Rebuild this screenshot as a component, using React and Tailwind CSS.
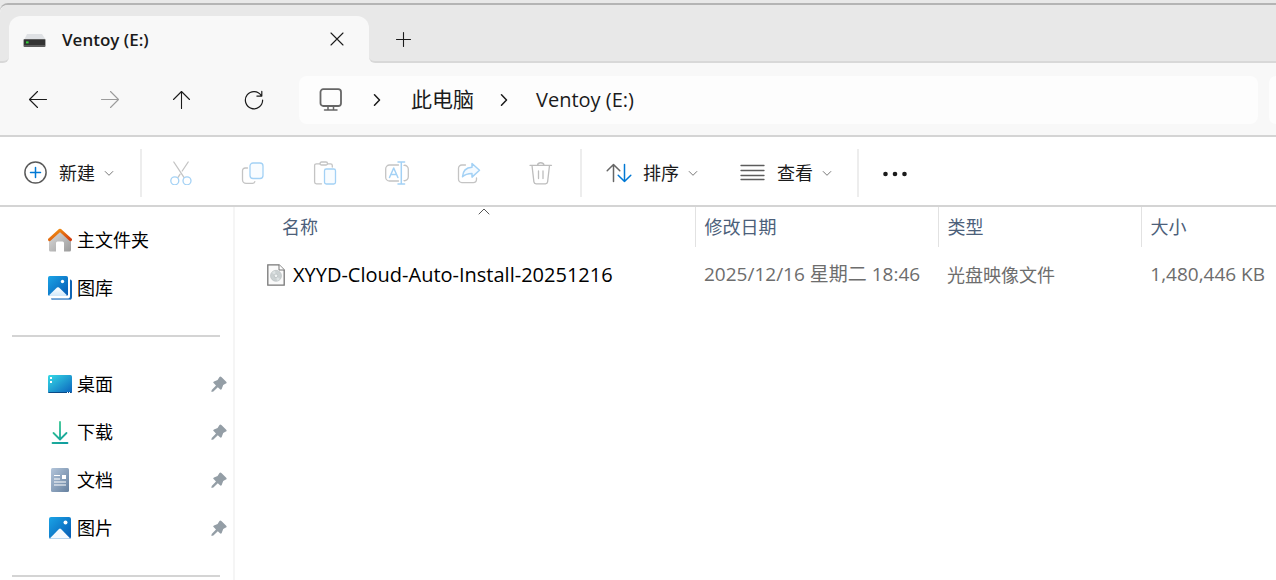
import React from "react";

const DriveIcon = () => (
  <svg width="24" height="24" viewBox="0 0 24 24">
    <path d="M4 6h15l4 6H1z" fill="#dfe1e4" />
    <rect x="0.5" y="11" width="22" height="8" rx="1" fill="#5c5c5c" />
    <rect x="1" y="12" width="21" height="5" fill="#333333" />
    <rect x="3" y="13.4" width="2.6" height="2" fill="#35d43a" />
  </svg>
);

const Stroke = ({ children, size = 24, width = 1.3, className = "" }) => (
  <svg
    width={size}
    height={size}
    viewBox={`0 0 ${size} ${size}`}
    fill="none"
    stroke="currentColor"
    strokeWidth={width}
    strokeLinecap="round"
    strokeLinejoin="round"
    className={`shrink-0 ${className}`}
  >
    {children}
  </svg>
);

const BackIcon = () => (
  <Stroke width={1.1}>
    <path d="M20.5 11.5H3.5M11.5 3.5l-8 8 8 8" />
  </Stroke>
);

const ForwardIcon = () => (
  <Stroke width={1.1}>
    <path d="M3.5 11.5h17M12.5 3.5l8 8-8 8" />
  </Stroke>
);

const UpIcon = () => (
  <Stroke width={1.1}>
    <path d="M11.5 20.5v-17M3.5 11.5l8-8 8 8" />
  </Stroke>
);

const RefreshIcon = () => (
  <Stroke width={1.2}>
    <path d="M19.2 7.5A8.6 8.6 0 1 0 20.6 12M19.8 3.4v4.7h-4.9" />
  </Stroke>
);

const MonitorIcon = () => (
  <Stroke width={1.8} className="text-[#666666]">
    <rect x="1.5" y="1.2" width="20.5" height="16.8" rx="2.8" />
    <path d="M9 18v4M14.5 18v4M5.5 22h12.5" strokeWidth="1.5" />
  </Stroke>
);

const CrumbIcon = () => (
  <Stroke size={12} width={1.5} className="text-[#1b1b1b]">
    <path d="M3.5 0.8l5 5.2-5 5.2" />
  </Stroke>
);

const ChevronDown = () => (
  <Stroke size={10} width={1} className="text-[#777777]">
    <path d="M1.2 3.5l3.8 3.8 3.8-3.8" />
  </Stroke>
);

const NewIcon = () => (
  <Stroke>
    <circle cx="11.5" cy="11.5" r="10.6" stroke="#5a5a5a" strokeWidth="1.5" />
    <path d="M11.5 6.5v10M6.5 11.5h10" stroke="#0078d4" strokeWidth="1.5" />
  </Stroke>
);

const CutIcon = () => (
  <Stroke>
    <path d="M4.8 1l10 15.2M19.2 1l-6 9M11 13.3l-2 3" stroke="#c4c4c4" />
    <circle cx="5.8" cy="19.8" r="4" stroke="#a3d1f5" />
    <circle cx="18" cy="19.8" r="4" stroke="#a3d1f5" />
  </Stroke>
);

const CopyIcon = () => (
  <Stroke>
    <path
      d="M6.5 7H4.2a2.7 2.7 0 0 0-2.7 2.8v9a3.6 3.6 0 0 0 3.6 3.6h6.2a2.5 2.5 0 0 0 2.5-1.8"
      stroke="#c4c4c4"
    />
    <rect x="9" y="2" width="13" height="15.5" rx="3" stroke="#a3d1f5" fill="#f8fcff" />
  </Stroke>
);

const PasteIcon = () => (
  <Stroke>
    <path
      d="M7 2.8H3.4A1.8 1.8 0 0 0 1.6 4.6V21a1.8 1.8 0 0 0 1.8 1.8h5.1M14.5 2.8h3a1.8 1.8 0 0 1 1.8 1.8V6"
      stroke="#c4c4c4"
    />
    <rect x="7" y="1" width="7.5" height="3" rx="1.5" stroke="#c4c4c4" />
    <rect x="11.5" y="8" width="11" height="15" rx="1.8" stroke="#a3d1f5" fill="#f8fcff" />
  </Stroke>
);

const RenameIcon = () => (
  <Stroke>
    <path
      d="M13.5 4h-9A3.8 3.8 0 0 0 .7 7.8v8.4A3.8 3.8 0 0 0 4.5 20h9M19 4.3A3.8 3.8 0 0 1 23.3 8v8a3.8 3.8 0 0 1-4.3 3.7"
      stroke="#c4c4c4"
    />
    <path
      d="M4.5 16.5L8.7 7l4.2 9.5M6 13.5h5.4M16.3 1v22M13 1h6.6M13 23h6.6"
      stroke="#a3d1f5"
      strokeWidth="1.5"
    />
  </Stroke>
);

const ShareIcon = () => (
  <Stroke>
    <path
      d="M8.5 4H4.8a3.3 3.3 0 0 0-3.3 3.3v11a3.3 3.3 0 0 0 3.3 3.3h11.4a3.3 3.3 0 0 0 3.3-3.3V17"
      stroke="#c4c4c4"
    />
    <path
      d="M15 2.5l7.5 6.8-7.5 6.8v-3.6c-4.5 0-7 .8-9.5 3.3.3-6 3.8-9.3 9.5-9.6z"
      stroke="#a3d1f5"
      strokeWidth="1.5"
      fill="#f4faff"
    />
  </Stroke>
);

const TrashIcon = () => (
  <Stroke className="text-[#bdbdbd]">
    <path d="M1 4.3h21.5M3 4.5l1.9 16.4a2.2 2.2 0 0 0 2.2 1.9h9.3a2.2 2.2 0 0 0 2.2-1.9l1.9-16.4M8.5 4A3.3 2.7 0 0 1 15 4M9.5 10v7.5M14 10v7.5" />
  </Stroke>
);

const SortIcon = () => (
  <Stroke size={26} width={1.5}>
    <path d="M7.5 21.5v-17M1.2 10.8l6.3-6.3 6.3 6.3" stroke="#666666" />
    <path d="M18.5 4.500v17M12.200 15.200l6.300 6.300 6.300-6.300" stroke="#0078d4" />
  </Stroke>
);

const ViewIcon = () => (
  <Stroke size={26} width={1.3} className="text-[#5c5c5c]">
    <path d="M1 5.5h23M1 10.5h23M1 15.5h23M1 19.5h23" />
  </Stroke>
);

const MoreIcon = () => (
  <svg width="26" height="24" viewBox="0 0 26 24" fill="#1b1b1b">
    <circle cx="3.5" cy="13" r="2.3" />
    <circle cx="13" cy="13" r="2.3" />
    <circle cx="22.5" cy="13" r="2.3" />
  </svg>
);

const HomeIcon = () => (
  <svg width="24" height="24" viewBox="0 0 24 24">
    <defs>
      <linearGradient id="wall" x1="0" y1="0" x2="1" y2="1">
        <stop offset="0" stopColor="#dedede" />
        <stop offset="1" stopColor="#9b9b9b" />
      </linearGradient>
      <linearGradient id="roof" x1="0" y1="0" x2="1" y2="1">
        <stop offset="0" stopColor="#f59b14" />
        <stop offset="1" stopColor="#d23c0e" />
      </linearGradient>
    </defs>
    <path
      d="M12 2.5L1 12.8V22a1.500 1.500 0 0 0 1.500 1.500H8V15a1.500 1.500 0 0 1 1.500-1.500h5A1.500 1.500 0 0 1 16 15v8.500h5.500A1.500 1.500 0 0 0 23 22v-9.200z"
      fill="url(#wall)"
    />
    <path
      d="M1.5 11.7L12 2.2l10.5 9.5"
      fill="none"
      stroke="url(#roof)"
      strokeWidth="3"
      strokeLinecap="round"
      strokeLinejoin="round"
    />
  </svg>
);

const GalleryIcon = () => (
  <svg width="24" height="24" viewBox="0 0 24 24">
    <defs>
      <linearGradient id="sky" x1="0" y1="0" x2="1" y2="1">
        <stop offset="0" stopColor="#1ba4e6" />
        <stop offset="1" stopColor="#0559b3" />
      </linearGradient>
      <linearGradient id="hill" x1="0" y1="0" x2="0" y2="1">
        <stop offset="0" stopColor="#ffffff" />
        <stop offset="1" stopColor="#cfe8fb" />
      </linearGradient>
    </defs>
    <path d="M3 22.5h17a2 2 0 0 0 2-2v-17a2 2 0 0 1 2 1.800V21a3 3 0 0 1-3 3H5a2 2 0 0 1-2-1.500z" fill="#1266b5" />
    <path d="M3 22.5h17l3 1a3 3 0 0 1-2 .5H5a2 2 0 0 1-2-1.500z" fill="#6ea3d8" />
    <rect width="20" height="20" rx="1.8" fill="url(#sky)" />
    <path d="M1 19.300l8-7.700a1.500 1.500 0 0 1 2 0l8 7.700q-.4.700-1.200.7H2.200Q1.300 20 1 19.300z" fill="url(#hill)" />
    <circle cx="14.5" cy="5.5" r="1.7" fill="#fff" />
  </svg>
);

const DesktopIcon = () => (
  <svg width="24" height="24" viewBox="0 0 24 24">
    <defs>
      <linearGradient id="desk" x1="0" y1="0" x2="1" y2="1">
        <stop offset="0" stopColor="#36dbe6" />
        <stop offset="1" stopColor="#0b62bd" />
      </linearGradient>
    </defs>
    <rect y="3" width="24" height="18" rx="1.5" fill="url(#desk)" />
    <path d="M0 20h24a1.500 1.500 0 0 1-1.500 1h-21A1.500 1.500 0 0 1 0 20z" fill="#0a4a86" />
    <path d="M2 5h2v2H2zM2 9h2v2H2zM19 20h1v1h-1zM21 20h1v1h-1z" fill="#fff" />
  </svg>
);

const DownloadIcon = () => (
  <svg width="24" height="24" viewBox="0 0 24 24">
    <defs>
      <linearGradient id="down" gradientUnits="userSpaceOnUse" x1="4" y1="0" x2="20" y2="24">
        <stop offset="0" stopColor="#3fcf8e" />
        <stop offset="1" stopColor="#0c9aa0" />
      </linearGradient>
    </defs>
    <path
      d="M12 2v17M5.5 13l6.500 6.500 6.500-6.500M4.500 23h15"
      fill="none"
      stroke="url(#down)"
      strokeWidth="1.8"
      strokeLinecap="round"
      strokeLinejoin="round"
    />
  </svg>
);

const DocumentIcon = () => (
  <svg width="24" height="24" viewBox="0 0 24 24">
    <defs>
      <linearGradient id="doc" x1="0" y1="0" x2="1" y2="1">
        <stop offset="0" stopColor="#b3c5da" />
        <stop offset="1" stopColor="#65809f" />
      </linearGradient>
    </defs>
    <rect x="3" width="18" height="24" rx="1.5" fill="url(#doc)" />
    <path d="M6 7.5h6M6 11h6M6 14h12M6 17h12" stroke="#fff" strokeWidth="1.2" />
    <rect x="14" y="7" width="4" height="4" fill="#fff" />
  </svg>
);

const PictureIcon = () => (
  <svg width="24" height="24" viewBox="0 0 24 24">
    <rect x="1" y="1" width="22" height="22" rx="2" fill="url(#sky)" />
    <path d="M2 22.200l9-9.200a1.500 1.500 0 0 1 2 0l9 9.200q-.5.600-1.200.6H3.200q-.7 0-1.200-.6z" fill="#f4f9fe" />
    <circle cx="17.5" cy="6.5" r="2" fill="#fff" />
  </svg>
);

const PinIcon = () => (
  <svg width="16" height="16" viewBox="0 0 16 16" className="shrink-0" fill="#949ea6">
    <path d="M8.300 1.200q1-1.200 2.100-.1l4.800 4.600q1 1.200-.3 1.900l-2.700 1.500-1.500 3.800q-.7 1.300-1.700.3L6.800 11.200 2.400 15.400.4 15.900l.3-1.900 4.300-4.500L2.600 7.100q-.9-1.100.4-1.700L6.600 4z" />
  </svg>
);

const DiscImageIcon = () => (
  <svg width="18" height="22" viewBox="0 0 18 22" className="shrink-0">
    <path d="M.8.8H12L17.200 6v15.200H.8z" fill="#fafafa" stroke="#777" strokeWidth="1.3" />
    <path d="M12 .8V6h5.200" fill="#fff" stroke="#777" />
    <circle cx="9" cy="11.800" r="5.500" fill="#cbd1d2" stroke="#b4babc" strokeWidth=".6" />
    <path d="M9 11.800L5 8.700a5 5 0 0 1 3-1.800zM9 11.800l4 3.100a5 5 0 0 1-3 1.800z" fill="#dde2e3" />
    <circle cx="9" cy="11.800" r="1.800" fill="#f1f4f4" stroke="#aeb5b7" strokeWidth=".6" />
  </svg>
);

const actions = [
  { label: "剪切", icon: <CutIcon /> },
  { label: "复制", icon: <CopyIcon /> },
  { label: "粘贴", icon: <PasteIcon /> },
  { label: "重命名", icon: <RenameIcon /> },
  { label: "共享", icon: <ShareIcon /> },
  { label: "删除", icon: <TrashIcon /> },
];

const places = [
  { name: "主文件夹", icon: <HomeIcon /> },
  { name: "图库", icon: <GalleryIcon /> },
];

const pinned = [
  { name: "桌面", icon: <DesktopIcon /> },
  { name: "下载", icon: <DownloadIcon /> },
  { name: "文档", icon: <DocumentIcon /> },
  { name: "图片", icon: <PictureIcon /> },
];

const files = [
  {
    name: "XYYD-Cloud-Auto-Install-20251216",
    date: "2025/12/16 星期二 18:46",
    type: "光盘映像文件",
    size: "1,480,446 KB",
  },
];

const TabBar = () => (
  <div className="bg-[#e8e8e8] pt-[3px]">
    <div className="flex h-[60px] rounded-tl-lg border-t-2 border-[#b4b4b4] bg-[#f8f8f8]">
      <div className="w-[9px] rounded-tl-lg rounded-br-md border-b-2 border-[#d8d8d8] bg-[#e8e8e8]" />
      <div className="w-[360px] bg-[#e8e8e8] pt-[11px]">
        <div className="flex h-full items-center rounded-t-xl bg-[#f8f8f8] pl-[14px] pr-5">
          <DriveIcon />
          <span className="ml-[15px] flex-1 text-[17px] font-semibold">Ventoy (E:)</span>
          <button aria-label="关闭标签页" className="p-1">
            <Stroke size={16} width={1.1}>
              <path d="M2 1l12 12M14 1L2 13" />
            </Stroke>
          </button>
        </div>
      </div>
      <div className="flex flex-1 items-center rounded-bl-md border-b-2 border-[#d8d8d8] bg-[#e8e8e8] pl-[22px] pt-[11px]">
        <button aria-label="新建标签页" className="p-1">
          <Stroke size={16} width={1.1}>
            <path d="M8.5 1.500v14M1.500 8.500h14" />
          </Stroke>
        </button>
      </div>
    </div>
  </div>
);

const NavButton = ({ label, disabled, children }) => (
  <button
    aria-label={label}
    disabled={disabled}
    className="flex h-12 w-[72px] items-center justify-center disabled:text-[#9c9c9c]"
  >
    {children}
  </button>
);

const NavBar = () => (
  <div className="flex items-center border-b-2 border-[#d4d4d4] bg-[#f8f8f8] pb-[11px] pl-[2px] pt-[13px]">
    <NavButton label="后退">
      <BackIcon />
    </NavButton>
    <NavButton label="前进" disabled>
      <ForwardIcon />
    </NavButton>
    <NavButton label="上移">
      <UpIcon />
    </NavButton>
    <NavButton label="刷新">
      <RefreshIcon />
    </NavButton>
    <nav className="ml-[9px] mr-[11px] flex h-12 flex-1 items-center rounded-lg bg-[#fdfdfd] pl-5">
      <MonitorIcon />
      <span className="ml-7">
        <CrumbIcon />
      </span>
      <a href="#pc" className="ml-7 text-[21px]">
        此电脑
      </a>
      <span className="ml-6">
        <CrumbIcon />
      </span>
      <a href="#drive" className="ml-[26px] text-xl">
        Ventoy (E:)
      </a>
    </nav>
    <div className="h-12 w-[7px] rounded-l-lg bg-[#fdfdfd]" />
  </div>
);

const Divider = () => <div className="h-12 w-[2px] bg-[#ededed]" />;

const MenuButton = ({ icon, label, className }) => (
  <button className={`flex items-center text-lg ${className}`}>
    {icon}
    <span className="ml-[11px]">{label}</span>
    <span className="ml-[9px]">
      <ChevronDown />
    </span>
  </button>
);

const Toolbar = () => (
  <div className="flex h-[70px] items-center border-b-2 border-[#d4d4d4] pl-6 pt-1">
    <MenuButton icon={<NewIcon />} label="新建" className="mr-[26px]" />
    <Divider />
    <div className="mx-[3px] flex">
      {actions.map((action) => (
        <button
          key={action.label}
          aria-label={action.label}
          disabled
          className="flex w-[72px] items-center justify-center"
        >
          {action.icon}
        </button>
      ))}
    </div>
    <Divider />
    <MenuButton icon={<SortIcon />} label="排序" className="ml-6" />
    <MenuButton icon={<ViewIcon />} label="查看" className="ml-[42px] mr-[25px]" />
    <Divider />
    <button aria-label="查看更多" className="ml-[23px]">
      <MoreIcon />
    </button>
  </div>
);

const SidebarItem = ({ icon, name, pin }) => (
  <a href={`#${name}`} className="flex h-12 items-center pl-12 pr-[6px] text-lg text-black">
    {icon}
    <span className="ml-[5px] flex-1">{name}</span>
    {pin ? <PinIcon /> : null}
  </a>
);

const Sidebar = () => (
  <aside className="w-[235px] shrink-0 border-r-2 border-[#f5f5f5] pt-[9px]">
    {places.map((place) => (
      <SidebarItem key={place.name} {...place} />
    ))}
    <hr className="my-[23px] ml-3 mr-[13px] border-t-2 border-[#d4d4d4]" />
    {pinned.map((place) => (
      <SidebarItem key={place.name} {...place} pin />
    ))}
    <hr className="ml-3 mr-[13px] mt-[23px] border-t-2 border-[#d4d4d4]" />
  </aside>
);

const FileTable = () => (
  <table className="w-full table-fixed text-left text-lg">
    <thead className="text-[#4c607a]">
      <tr className="h-10">
        <th className="p-0 pl-[38px] font-normal">
          <button className="relative flex h-10 w-full items-center pl-[9px]">
            名称
            <span className="absolute left-1/2 top-0 -translate-x-1/2">
              <Stroke size={12} width={1} className="text-[#555555]">
                <path d="M1 7l5-5 5 5" />
              </Stroke>
            </span>
          </button>
        </th>
        <th className="w-[243px] border-l border-[#e2e2e2] p-0 pl-[9px] font-normal">修改日期</th>
        <th className="w-[203px] border-l border-[#e2e2e2] p-0 pl-[9px] font-normal">类型</th>
        <th className="w-[135px] border-l border-[#e2e2e2] p-0 pl-[9px] font-normal">大小</th>
      </tr>
    </thead>
    <tbody className="text-[#6d6d6d]">
      {files.map((file) => (
        <tr key={file.name} className="h-14">
          <td className="p-0 pl-8">
            <div className="flex items-center text-black">
              <DiscImageIcon />
              <span className="ml-2 whitespace-nowrap text-xl">{file.name}</span>
            </div>
          </td>
          <td className="whitespace-nowrap p-0 pl-[9px] text-[19px]">{file.date}</td>
          <td className="whitespace-nowrap p-0 pl-[9px]">{file.type}</td>
          <td className="whitespace-nowrap p-0 pr-[11px] text-right text-[19px]">{file.size}</td>
        </tr>
      ))}
    </tbody>
  </table>
);

export default function App() {
  return (
    <div className="flex min-h-screen flex-col bg-white font-['Open_Sans','Noto_Sans_CJK_SC',sans-serif] text-[#1b1b1b]">
      <TabBar />
      <NavBar />
      <Toolbar />
      <div className="flex flex-1">
        <Sidebar />
        <main className="min-w-0 flex-1">
          <FileTable />
        </main>
      </div>
    </div>
  );
}
